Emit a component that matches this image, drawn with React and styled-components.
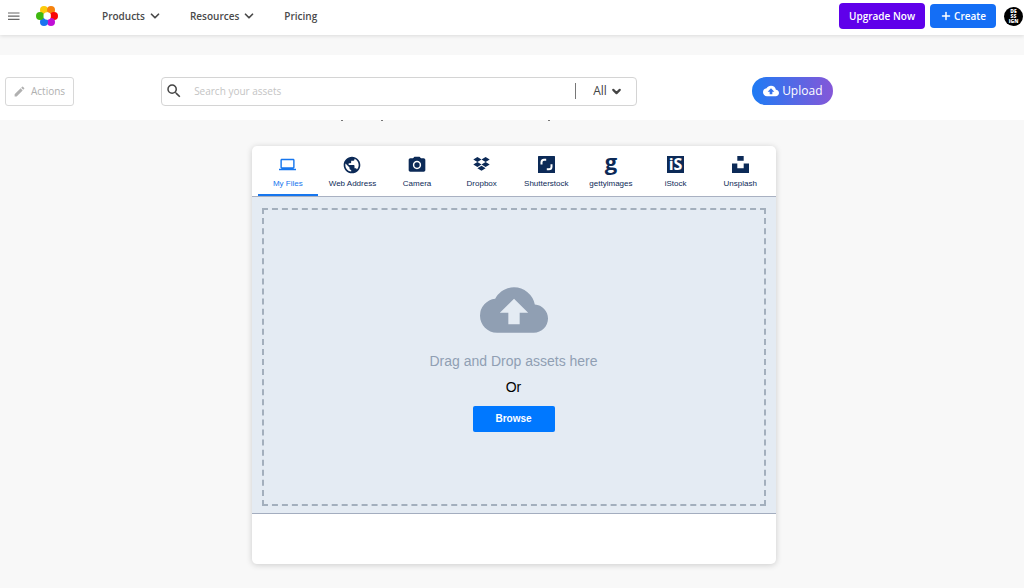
import React from 'react'
import styled, { createGlobalStyle, css } from 'styled-components'
import {
  MdCloudUpload,
  MdEdit,
  MdLaptop,
  MdPhotoCamera,
  MdPublic,
  MdSearch,
} from 'react-icons/md'
import { SiUnsplash } from 'react-icons/si'
import { ChevronDown, Plus } from 'lucide-react'

const NAV_FONT = '"Open Sans", sans-serif'
const WIDGET_FONT = 'Arial, "Liberation Sans", sans-serif'

const GlobalStyle = createGlobalStyle`
  *, *::before, *::after {
    box-sizing: border-box;
  }

  body {
    margin: 0;
    background: #f8f8f8;
    font-family: ${NAV_FONT};
  }

  button, input, select {
    font: inherit;
  }

  svg {
    display: block;
    flex: none;
  }
`

const HeaderUI = styled('header')`
  display: flex;
  align-items: center;
  height: 35px;
  padding: 0 1px 3px 7px;
  background: white;
  box-shadow: 0 1px 4px rgba(0, 0, 0, 0.12);
`

const IconButtonUI = styled('button')`
  padding: 0;
  border: 0;
  background: transparent;
  color: #666;
`

const LogoLinkUI = styled('a')`
  margin-left: 15px;
`

const NavUI = styled('nav')`
  display: flex;
  align-items: center;
  gap: 28px;
  margin-left: 44px;
  color: #4a4a4a;
  font-size: 10px;
  font-weight: 600;
  line-height: 14px;
`

const NavButtonUI = styled('button')`
  display: flex;
  align-items: center;
  gap: 3px;
  padding: 0;
  border: 0;
  background: transparent;
  color: inherit;
`

const NavLinkUI = styled('a')`
  color: inherit;
  text-decoration: none;
`

const HeaderActionsUI = styled('div')`
  display: flex;
  align-items: center;
  gap: 5px;
  margin-left: auto;
`

const HeaderButtonUI = styled('button')`
  display: flex;
  align-items: center;
  justify-content: center;
  gap: 2px;
  height: ${({ $kind }) => ($kind === 'upgrade' ? 26 : 24)}px;
  padding: 0 10px;
  border: 0;
  border-radius: 4px;
  background: ${({ $kind }) => ($kind === 'upgrade' ? '#5f00ea' : '#146ef5')};
  color: white;
  font-size: 10px;
  font-weight: 600;
  line-height: 14px;
`

const AvatarUI = styled('button')`
  display: grid;
  place-content: center;
  width: 19px;
  height: 19px;
  margin-left: 3px;
  padding: 0;
  border: 0;
  border-radius: 50%;
  background: black;
  color: white;
  font-size: 5px;
  font-weight: 800;
  line-height: 5px;

  span {
    display: block;
  }
`

const ToolbarUI = styled('div')`
  display: flex;
  align-items: center;
  height: 65px;
  margin-top: 20px;
  padding: 7px 5px 0;
  background: white;
`

const ActionsButtonUI = styled('button')`
  display: flex;
  align-items: center;
  gap: 5px;
  height: 29px;
  padding: 0 8px 0 7px;
  border: 1px solid #d8d8d8;
  border-radius: 3px;
  background: white;
  color: #b0b0b0;
  font-size: 10px;
  line-height: 14px;
`

const SearchUI = styled('form')`
  display: flex;
  flex: 0 1 476px;
  align-items: center;
  height: 29px;
  margin-left: 87px;
  padding: 0 13px 0 3px;
  border: 1px solid #d4d4d4;
  border-radius: 4px;
  color: #444;
`

const SearchInputUI = styled('input')`
  flex: 1;
  min-width: 0;
  margin-left: 11px;
  padding: 0;
  border: 0;
  outline: 0;
  background: transparent;
  color: #444;
  font-size: 10px;

  &::placeholder {
    color: #c4c4c4;
    opacity: 1;
  }
`

const FilterUI = styled('div')`
  display: flex;
  align-items: center;
  gap: 3px;
  height: 16px;
  padding-left: 17px;
  border-left: 1px solid #777;
`

const FilterSelectUI = styled('select')`
  padding: 0;
  border: 0;
  appearance: none;
  background: transparent;
  color: #444;
  font-size: 12px;
  line-height: 16px;
`

const UploadButtonUI = styled('button')`
  display: flex;
  align-items: center;
  gap: 3px;
  height: 28px;
  margin-left: 115px;
  padding: 0 11px;
  border: 0;
  border-radius: 14px;
  background: linear-gradient(90deg, #1e7bf4, #8557d8);
  color: white;
  font-size: 12px;
  line-height: 16px;
`

const IntroEdgeUI = styled('div')`
  display: flex;
  height: 1px;
  padding-left: 341px;

  &::before,
  &::after,
  i {
    width: 2px;
    height: 1px;
    background: #777;
    content: '';
  }

  i {
    margin: 0 165px 0 38px;
  }
`

const MainUI = styled('main')`
  display: flex;
  justify-content: center;
  padding: 25px 0 24px 3px;
`

const WidgetUI = styled('section')`
  width: 100%;
  max-width: 524px;
  overflow: hidden;
  border-radius: 5px;
  background: white;
  box-shadow: 0 1px 6px rgba(0, 0, 0, 0.18);
  font-family: ${WIDGET_FONT};
`

const TabsUI = styled('div')`
  display: grid;
  grid-template-columns: repeat(8, 1fr);
  height: 51px;
  padding: 0 3px 0 4px;
  border-bottom: 1px solid #a9b1c2;
`

const TabUI = styled('button')`
  display: flex;
  flex-direction: column;
  align-items: center;
  gap: 5px;
  margin: 0 2px;
  padding: 10px 0 0;
  border: 0;
  border-bottom: 2px solid transparent;
  background: transparent;
  color: #0c2a57;
  font-size: 8px;
  line-height: 12px;
  white-space: nowrap;

  ${({ $isActive }) =>
    $isActive &&
    css`
      border-bottom-color: #1676ee;
      color: #1676ee;
    `}
`

const TabIconUI = styled('span')`
  display: flex;
  align-items: center;
  justify-content: center;
  width: 20px;
  height: 17px;
`

const LetterIconUI = styled('span')`
  display: flex;
  align-items: center;
  justify-content: center;
  width: 17px;
  height: 17px;
  background: ${({ $isBoxed }) => ($isBoxed ? '#0c2a57' : 'transparent')};
  color: ${({ $isBoxed }) => ($isBoxed ? 'white' : '#0c2a57')};
  font-family: ${NAV_FONT};
  font-size: ${({ $isBoxed }) => ($isBoxed ? 16 : 22)}px;
  font-weight: 700;
  line-height: 17px;
  padding-bottom: ${({ $isBoxed }) => ($isBoxed ? 0 : 6)}px;
`

const DropAreaUI = styled('div')`
  padding: 11px 10px 7px;
  border-bottom: 1px solid #a3adbf;
  background: #e4ebf3;
`

const DashedBoxUI = styled('div')`
  display: flex;
  flex-direction: column;
  align-items: center;
  height: 298px;
  padding-top: 66px;
  border: 2px dashed #a3afbd;
  color: #909fb3;
  font-size: 14px;
  line-height: 20px;
`

const DropTextUI = styled('p')`
  margin: 7px 0 6px;
`

const OrTextUI = styled('p')`
  margin: 0;
  color: black;
`

const BrowseButtonUI = styled('button')`
  width: 82px;
  height: 26px;
  margin-top: 9px;
  padding: 0;
  border: 0;
  border-radius: 2px;
  background: #0078ff;
  color: white;
  font-size: 10px;
  font-weight: 700;
`

const WidgetFooterUI = styled('footer')`
  height: 50px;
`

const PETALS = [
  ['#fccb0a', 8, 5],
  ['#f6820d', 15, 5],
  ['#f90606', 18, 11],
  ['#c00fd6', 15, 17],
  ['#1a73f0', 8, 17],
  ['#3fb80f', 4, 11],
]

const Logo = () => (
  <svg width="22" height="22" viewBox="0 0 22 22" aria-hidden="true">
    {PETALS.map(([fill, cx, cy]) => (
      <circle key={fill} cx={cx} cy={cy} r="4" fill={fill} />
    ))}
    <circle cx="11.2" cy="11" r="3.7" fill="white" />
  </svg>
)

const MenuIcon = () => (
  <svg width="14" height="14" viewBox="0 0 14 14" aria-hidden="true">
    <path
      d="M1 4H12.5M1 7.2H12.5M1 10.4H12.5"
      stroke="currentColor"
      strokeWidth="1.2"
    />
  </svg>
)

const DropboxIcon = () => (
  <svg width="17" height="17" viewBox="0 0 17 17" aria-hidden="true">
    <path
      d="M4.4 1L8.5 3.5 4.4 6 .3 3.5zM12.6 1L16.7 3.5 12.6 6 8.5 3.5zM4.4 6L8.5 8.5 4.4 11 .3 8.5zM12.6 6L16.7 8.5 12.6 11 8.5 8.5zM4.4 12.2L8.5 9.7 12.6 12.2 8.5 14.8z"
      fill="currentColor"
    />
  </svg>
)

const ShutterstockIcon = () => (
  <svg width="17" height="17" viewBox="0 0 17 17" aria-hidden="true">
    <rect width="17" height="17" rx="0.5" fill="currentColor" />
    <path
      d="M3.5 8.5V6.2Q3.5 3.7 6 3.7H8.2M8.8 13.2H11Q13.5 13.2 13.5 10.7V8.3"
      fill="none"
      stroke="white"
      strokeWidth="2"
    />
  </svg>
)

const TABS = [
  { label: 'My Files', icon: <MdLaptop size={17} /> },
  { label: 'Web Address', icon: <MdPublic size={20} /> },
  { label: 'Camera', icon: <MdPhotoCamera size={20} /> },
  { label: 'Dropbox', icon: <DropboxIcon /> },
  { label: 'Shutterstock', icon: <ShutterstockIcon /> },
  { label: 'gettyimages', icon: <LetterIconUI>g</LetterIconUI> },
  { label: 'iStock', icon: <LetterIconUI $isBoxed>iS</LetterIconUI> },
  { label: 'Unsplash', icon: <SiUnsplash size={17} /> },
]

const Header = () => (
  <HeaderUI>
    <IconButtonUI type="button" aria-label="Menu">
      <MenuIcon />
    </IconButtonUI>
    <LogoLinkUI href="#" aria-label="Home">
      <Logo />
    </LogoLinkUI>
    <NavUI>
      <NavButtonUI type="button">
        Products
        <ChevronDown size={14} strokeWidth={3} />
      </NavButtonUI>
      <NavButtonUI type="button">
        Resources
        <ChevronDown size={14} strokeWidth={3} />
      </NavButtonUI>
      <NavLinkUI href="#">Pricing</NavLinkUI>
    </NavUI>
    <HeaderActionsUI>
      <HeaderButtonUI type="button" $kind="upgrade">
        Upgrade Now
      </HeaderButtonUI>
      <HeaderButtonUI type="button" $kind="create">
        <Plus size={12} strokeWidth={3} />
        Create
      </HeaderButtonUI>
      <AvatarUI type="button" aria-label="Account">
        <span>DE</span>
        <span>SS</span>
        <span>IGN</span>
      </AvatarUI>
    </HeaderActionsUI>
  </HeaderUI>
)

const Toolbar = () => (
  <ToolbarUI>
    <ActionsButtonUI type="button">
      <MdEdit size={13} />
      Actions
    </ActionsButtonUI>
    <SearchUI role="search">
      <MdSearch size={18} />
      <SearchInputUI
        type="text"
        aria-label="Search your assets"
        placeholder="Search your assets"
      />
      <FilterUI>
        <FilterSelectUI aria-label="Asset type" defaultValue="all">
          <option value="all">All</option>
        </FilterSelectUI>
        <ChevronDown size={13} strokeWidth={4} />
      </FilterUI>
    </SearchUI>
    <UploadButtonUI type="button">
      <MdCloudUpload size={16} />
      Upload
    </UploadButtonUI>
  </ToolbarUI>
)

const UploadWidget = () => (
  <WidgetUI>
    <TabsUI role="tablist">
      {TABS.map(({ label, icon }, index) => (
        <TabUI
          key={label}
          type="button"
          role="tab"
          aria-selected={index === 0}
          $isActive={index === 0}
        >
          <TabIconUI aria-hidden="true">{icon}</TabIconUI>
          {label}
        </TabUI>
      ))}
    </TabsUI>
    <DropAreaUI>
      <DashedBoxUI>
        <MdCloudUpload size={68} />
        <DropTextUI>Drag and Drop assets here</DropTextUI>
        <OrTextUI>Or</OrTextUI>
        <BrowseButtonUI type="button">Browse</BrowseButtonUI>
      </DashedBoxUI>
    </DropAreaUI>
    <WidgetFooterUI />
  </WidgetUI>
)

export default function App() {
  return (
    <>
      <GlobalStyle />
      <Header />
      <Toolbar />
      <IntroEdgeUI>
        <i />
      </IntroEdgeUI>
      <MainUI>
        <UploadWidget />
      </MainUI>
    </>
  )
}
